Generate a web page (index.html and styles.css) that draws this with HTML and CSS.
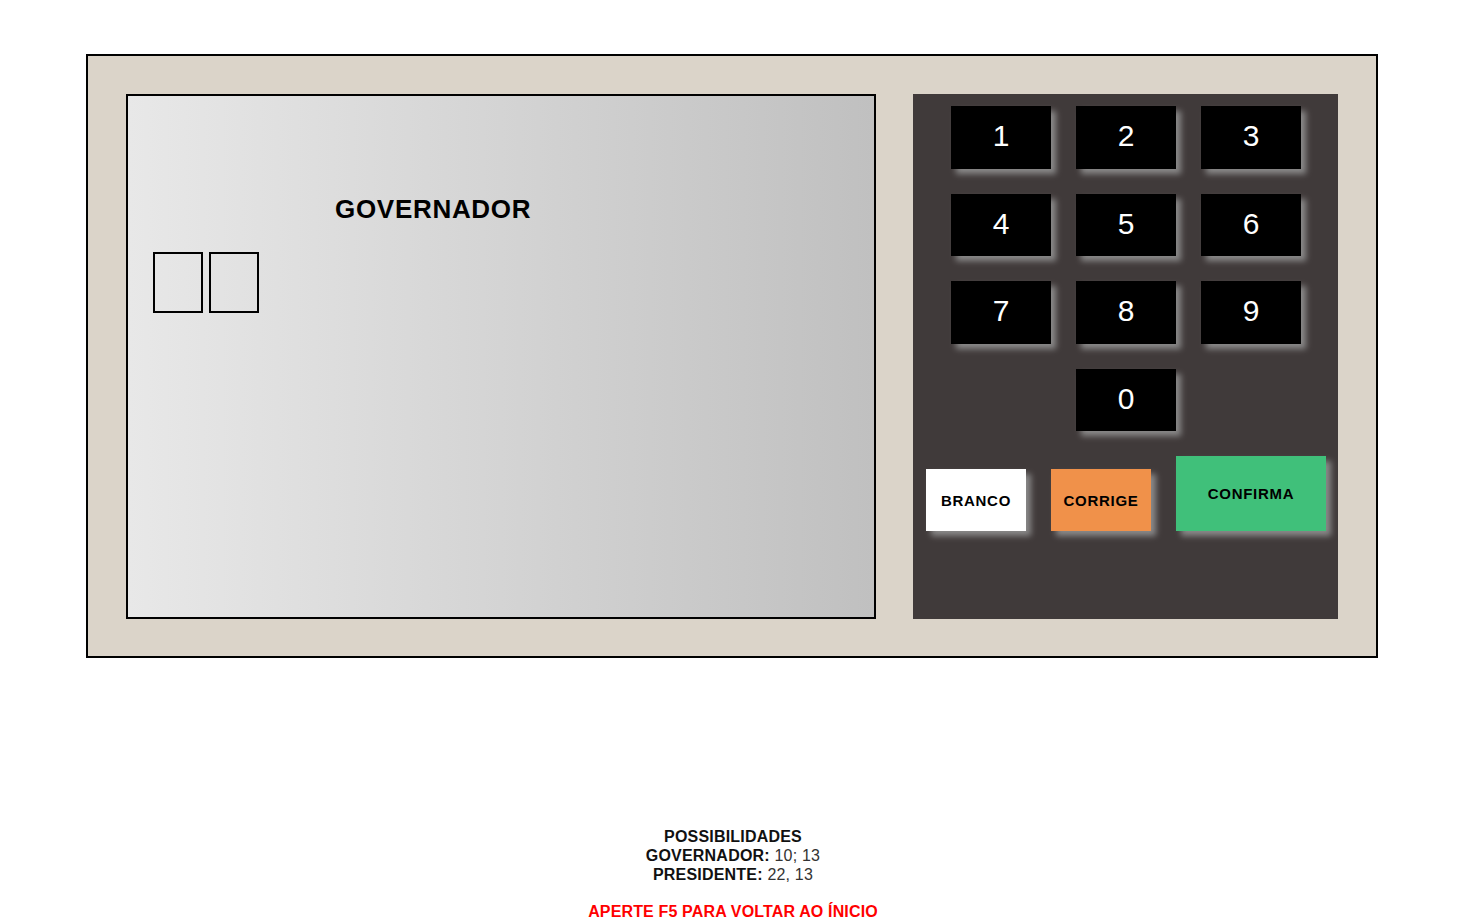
FILE: index.html
```html
<!DOCTYPE html>
<html lang="pt-BR">
<head>
<meta charset="utf-8">
<title>Urna</title>
<link rel="stylesheet" href="styles.css">
</head>
<body>
<div class="urna">
  <div class="tela">
    <div class="cargo">GOVERNADOR</div>
    <div class="numeros">
      <div class="digito"></div>
      <div class="digito"></div>
    </div>
  </div>
  <div class="teclado">
    <div class="teclas">
      <div class="tecla">1</div>
      <div class="tecla">2</div>
      <div class="tecla">3</div>
      <div class="tecla">4</div>
      <div class="tecla">5</div>
      <div class="tecla">6</div>
      <div class="tecla">7</div>
      <div class="tecla">8</div>
      <div class="tecla">9</div>
      <div class="tecla zero">0</div>
    </div>
    <div class="acoes">
      <div class="botao branco">BRANCO</div>
      <div class="botao corrige">CORRIGE</div>
      <div class="botao confirma">CONFIRMA</div>
    </div>
  </div>
</div>
<div class="info">
  <div class="titulo">POSSIBILIDADES</div>
  <div><b>GOVERNADOR:</b> <span class="val">10; 13</span></div>
  <div><b>PRESIDENTE:</b> <span class="val">22, 13</span></div>
  <div class="aviso">APERTE F5 PARA VOLTAR AO ÍNICIO</div>
</div>
</body>
</html>
```

FILE: styles.css
```css
html, body {
  margin: 0;
  padding: 0;
  background: #ffffff;
  font-family: "Liberation Sans", Arial, sans-serif;
}

.urna {
  box-sizing: border-box;
  width: 1292px;
  height: 604px;
  margin: 54px 0 0 86px;
  border: 2px solid #000;
  background: #dbd4c9;
  padding: 38px 38px 37px 38px;
  display: flex;
  gap: 37px;
}

.tela {
  box-sizing: border-box;
  width: 750px;
  height: 525px;
  border: 2px solid #000;
  background: linear-gradient(to right, #e8e8e8, #c0c0c0);
  padding: 99px 0 0 25px;
}

.cargo {
  margin-left: 182px;
  font-size: 26px;
  font-weight: bold;
  letter-spacing: 0.7px;
  color: #000;
  line-height: 28px;
}

.numeros {
  display: flex;
  gap: 6px;
  margin-top: 29px;
}

.digito {
  box-sizing: border-box;
  width: 50px;
  height: 61px;
  border: 2px solid #000;
}

.teclado {
  box-sizing: border-box;
  width: 425px;
  height: 525px;
  background: #403a3a;
  padding: 12px 0 0 0;
}

.teclas {
  display: grid;
  grid-template-columns: repeat(3, 100px);
  grid-auto-rows: 62.5px;
  column-gap: 25px;
  row-gap: 25px;
  margin-left: 38px;
}

.tecla {
  background: #000;
  color: #fff;
  font-size: 30px;
  display: flex;
  align-items: center;
  justify-content: center;
  padding-bottom: 2px;
  box-sizing: border-box;
  box-shadow: 5px 5px 6px rgba(150, 150, 150, 0.85);
}

.zero {
  grid-column: 2;
}

.acoes {
  display: flex;
  align-items: flex-end;
  gap: 25px;
  margin: 25px 0 0 13px;
}

.botao {
  width: 100px;
  height: 62px;
  display: flex;
  align-items: center;
  justify-content: center;
  font-size: 15px;
  font-weight: bold;
  letter-spacing: 0.7px;
  color: #000;
  box-shadow: 5px 5px 6px rgba(150, 150, 150, 0.85);
}

.branco {
  background: #ffffff;
}

.corrige {
  background: #f0914a;
}

.confirma {
  width: 150px;
  height: 75px;
  background: #40c07a;
}

.info {
  margin-top: 169px;
  text-align: center;
  font-size: 16px;
  line-height: 19px;
  color: #111;
  letter-spacing: 0.2px;
}

.info b {
  font-weight: bold;
}

.val {
  color: #333;
}

.titulo {
  font-weight: bold;
}

.aviso {
  margin-top: 18px;
  color: #ff0000;
  font-weight: bold;
  letter-spacing: 0.15px;
}
```
